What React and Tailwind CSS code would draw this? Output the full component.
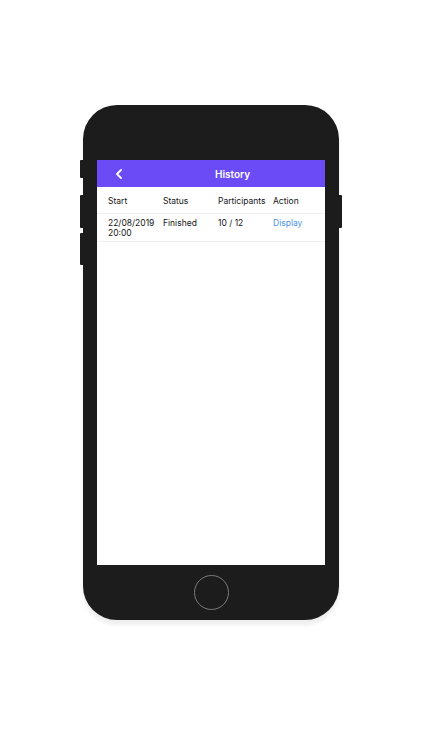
import React from "react";

export default function App() {
  const font = { fontFamily: "Inter, 'Noto Sans', sans-serif" };
  return (
    <div className="w-[422px] h-[750px] bg-white flex justify-center pt-[105px]" style={font}>
      <div className="relative w-[256px] h-[515px] bg-[#1c1c1c] rounded-[34px] shadow-[0_5px_4px_rgba(0,0,0,0.07)] flex flex-col items-center pt-[55px]">
        {/* side buttons */}
        <div className="absolute left-[-3px] top-[55px] w-[3px] h-[18px] bg-[#1c1c1c] rounded-l-[1px]" />
        <div className="absolute left-[-3px] top-[90px] w-[3px] h-[33px] bg-[#1c1c1c] rounded-l-[1px]" />
        <div className="absolute left-[-3px] top-[128px] w-[3px] h-[32px] bg-[#1c1c1c] rounded-l-[1px]" />
        <div className="absolute right-[-3px] top-[90px] w-[3px] h-[33px] bg-[#1c1c1c] rounded-r-[1px]" />

        {/* screen */}
        <div className="w-[228px] h-[405px] bg-white flex flex-col">
          <div className="h-[27px] bg-[#6a4bf6] flex items-center">
            <div className="w-[43px] h-full flex items-center pl-[18px]">
              <svg width="8" height="10" viewBox="0 0 8 10" fill="none">
                <path d="M6 1 L2 5 L6 9" stroke="white" strokeWidth="1.8" strokeLinecap="round" strokeLinejoin="round" />
              </svg>
            </div>
            <div className="flex-1 text-center text-white text-[10px] font-semibold leading-none">History</div>
          </div>
          <div className="text-[8.5px] leading-[10px] text-[#161616]">
            <div className="grid grid-cols-[55px_55px_55px_52px] pl-[11px] pt-[9px] pb-[7px] border-b border-[#f0f0f0]">
              <div>Start</div>
              <div>Status</div>
              <div>Participants</div>
              <div>Action</div>
            </div>
            <div className="grid grid-cols-[55px_55px_55px_52px] pl-[11px] pt-[4px] pb-[3px] border-b border-[#f0f0f0]">
              <div>22/08/2019<br />20:00</div>
              <div>Finished</div>
              <div>10 / 12</div>
              <div className="text-[#4a90e2]">Display</div>
            </div>
          </div>
        </div>

        {/* home button */}
        <div className="mt-[10px] w-[35px] h-[35px] rounded-full border-[1.5px] border-[#7a7a7a]" />
      </div>
    </div>
  );
}
